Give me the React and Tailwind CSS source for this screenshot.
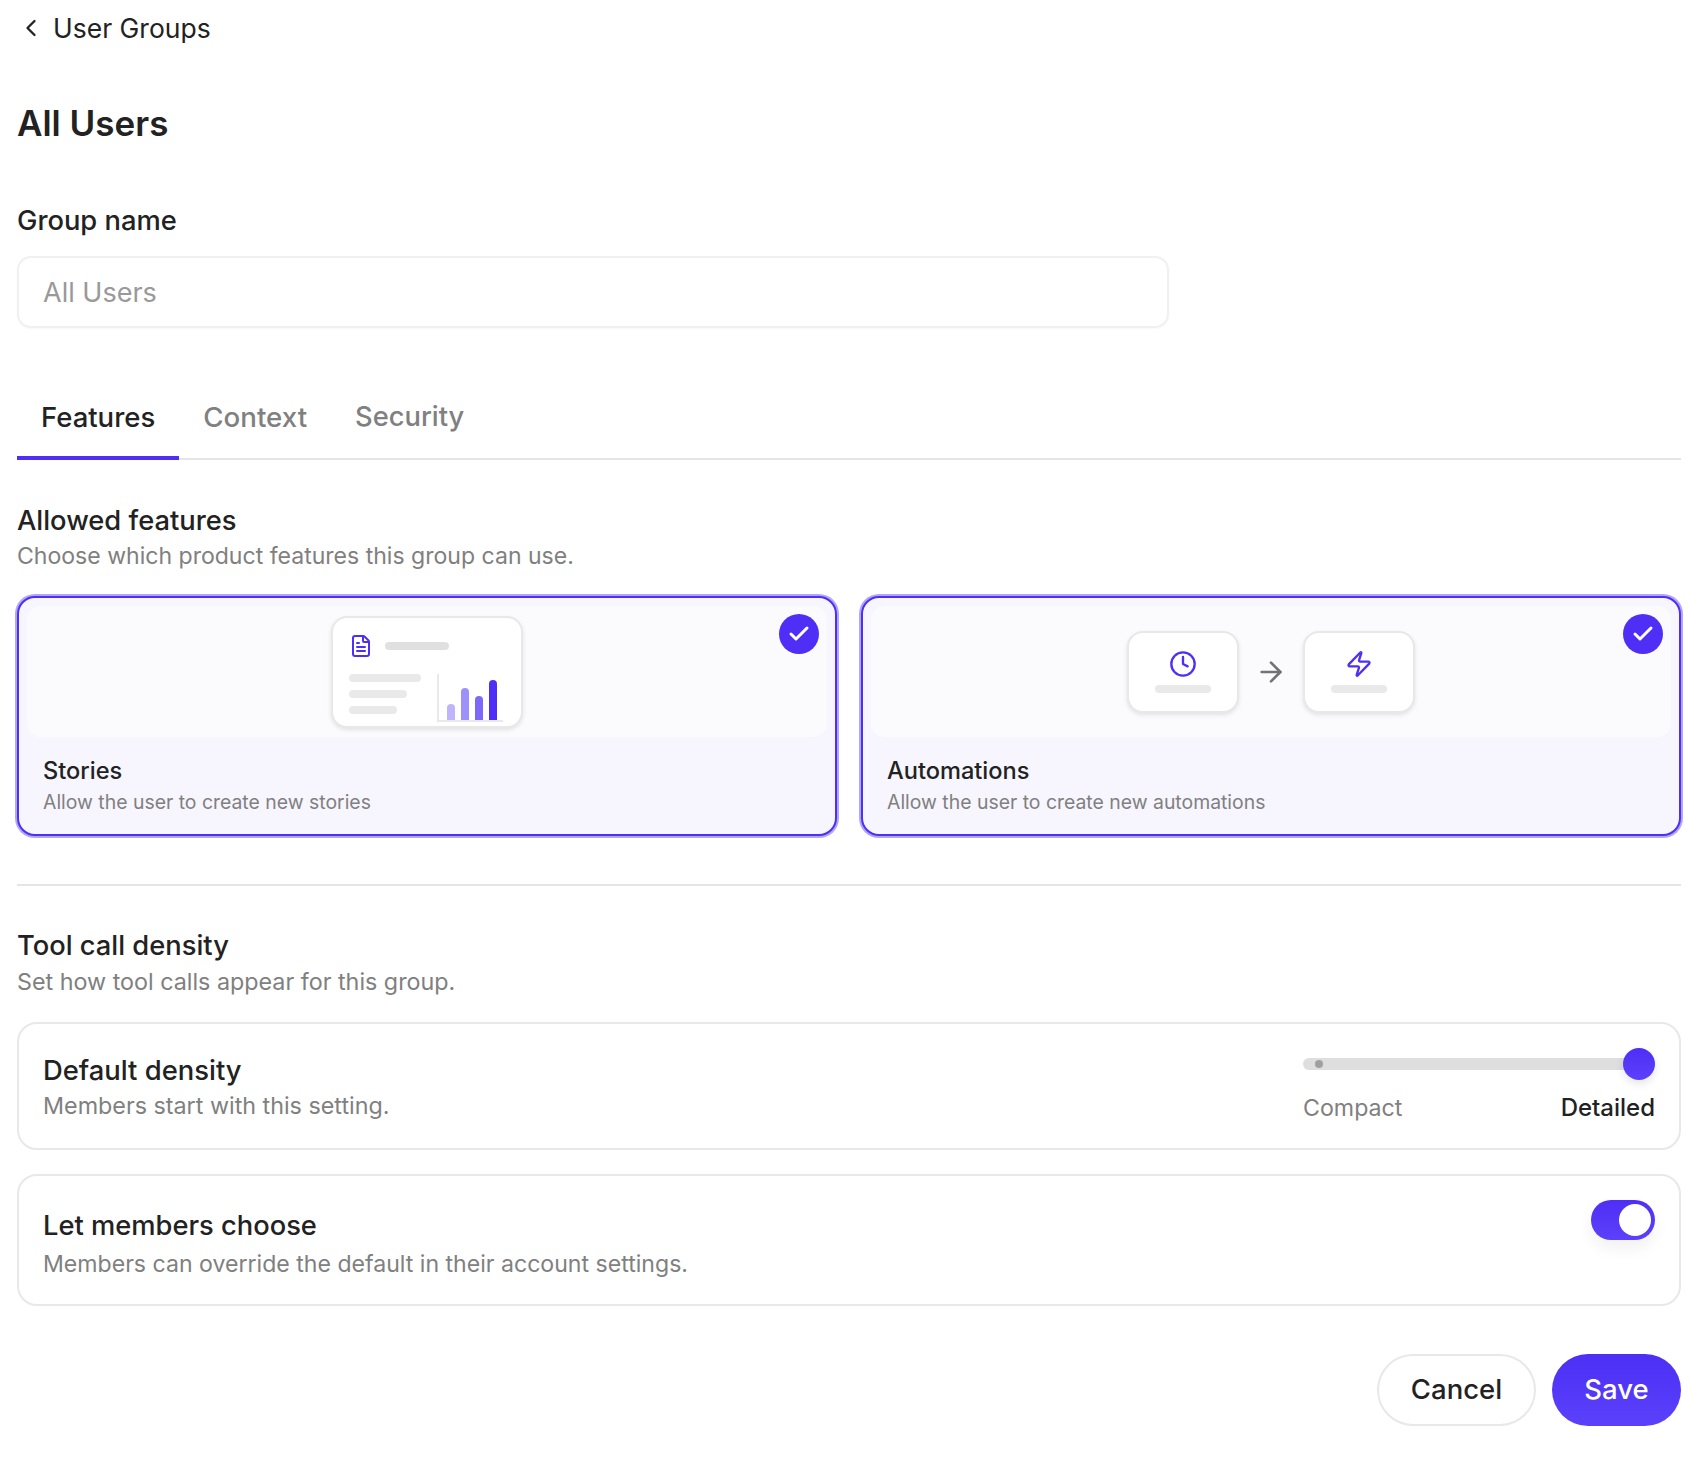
import React from "react";
import { ChevronLeft, FileText, Clock, Zap, ArrowRight, Check } from "lucide-react";

function Badge() {
  return (
    <div className="absolute right-4 top-4 flex h-10 w-10 items-center justify-center rounded-full bg-[#4f2ef5] text-white">
      <Check size={24} strokeWidth={3} />
    </div>
  );
}

function FeatureCard({ title, desc, children }) {
  return (
    <div className="relative flex h-[240px] flex-col rounded-[18px] border-2 border-[#4f2ef5] bg-[#f7f6fe] p-[8px] ring-2 ring-[#b0a6fb]">
      <div className="flex h-[131px] items-center justify-center rounded-[14px] bg-[#fbfbfe]">{children}</div>
      <div className="mt-[18px] pl-[16px] text-[23.6px] leading-[32px] font-medium text-[#222222]">{title}</div>
      <div className="pl-[16px] text-[19.4px] leading-[30px] text-[#808080]">{desc}</div>
      <Badge />
    </div>
  );
}

function Tile({ icon }) {
  return (
    <div className="flex h-[82px] w-[112px] flex-col items-center rounded-[16px] border-2 border-[#e8e8e8] bg-white pt-[17px] shadow-[0_2px_4px_rgba(0,0,0,0.1)]">
      {icon}
      <div className="mt-[7px] h-2 w-14 rounded-full bg-[#e9e9e9]" />
    </div>
  );
}

function Bar({ h, c }) {
  return <div className={`w-2 rounded-t-[4px] ${h} ${c}`} />;
}

export default function App() {
  return (
    <div className="min-h-[1484px] bg-white pl-[17px] pr-[21px] font-['Inter',sans-serif] text-[#222222]">
      <div className="flex h-[56px] items-center text-[#222222]">
        <ChevronLeft size={28} strokeWidth={2} />
        <span className="ml-[8px] text-[26.5px] leading-[36px]">User Groups</span>
      </div>
      <h1 className="mt-[43px] text-[35px] leading-[48px] font-semibold">All Users</h1>
      <div className="mt-[58px] text-[27.3px] leading-[32px] font-medium">Group name</div>
      <div className="mt-[19px] flex h-[72px] w-[1152px] items-center rounded-[14px] border-2 border-[#f0f0f0] pl-[24px] pt-[2px] text-[27px] text-[#999999] shadow-[0_1px_2px_rgba(0,0,0,0.03)]">All Users</div>

      <div className="mt-[71px] flex border-b-2 border-[#e5e5e5]">
        <div className="-mb-[2px] border-b-4 border-[#4f2ef5] px-6 pb-[21px] text-[27.5px] leading-[36px] font-medium">Features</div>
        <div className="px-6 text-[27.7px] leading-[36px] font-medium text-[#808080]">Context</div>
        <div className="px-6 text-[27.3px] leading-[36px] font-medium text-[#808080]">Security</div>
      </div>

      <div className="mt-[43px] text-[27.3px] leading-[36px] font-medium">Allowed features</div>
      <div className="-mt-px text-[23.05px] leading-[36px] text-[#808080]">Choose which product features this group can use.</div>

      <div className="mt-[22px] grid grid-cols-2 gap-6">
        <FeatureCard title="Stories" desc="Allow the user to create new stories">
          <div className="h-[112px] w-[192px] rounded-[16px] border-2 border-[#e8e8e8] bg-white pl-[16px] pt-[16px] shadow-[0_2px_4px_rgba(0,0,0,0.1)]">
            <div className="flex h-6 items-center gap-3">
              <FileText size={24} className="text-[#4f2ef5]" />
              <div className="h-2 w-16 rounded-full bg-[#e0e0e0]" />
            </div>
            <div className="mt-4 flex">
              <div className="flex w-[88px] flex-col gap-2">
                <div className="h-2 w-[72px] rounded-full bg-[#e9e9e9]" />
                <div className="h-2 w-[58px] rounded-full bg-[#e9e9e9]" />
                <div className="h-2 w-[48px] rounded-full bg-[#e9e9e9]" />
              </div>
              <div className="flex h-[48px] w-[66px] items-end gap-[6px] border-b-2 border-l-2 border-[#e9e9e9] pl-2">
                <Bar h="h-4" c="bg-[#c0b5fc]" />
                <Bar h="h-8" c="bg-[#9e90fb]" />
                <Bar h="h-6" c="bg-[#7e68fa]" />
                <Bar h="h-10" c="bg-[#4f2ef5]" />
              </div>
            </div>
          </div>
        </FeatureCard>
        <FeatureCard title="Automations" desc="Allow the user to create new automations">
          <div className="flex items-center gap-4">
            <Tile icon={<Clock size={28} className="text-[#4f2ef5]" />} />
            <ArrowRight size={32} className="text-[#737373]" />
            <Tile icon={<Zap size={28} className="text-[#4f2ef5]" />} />
          </div>
        </FeatureCard>
      </div>

      <div className="mt-[48px] h-[2px] bg-[#e5e5e5]" />

      <div className="mt-[42px] text-[27.3px] leading-[36px] font-medium">Tool call density</div>
      <div className="text-[23.3px] leading-[36px] text-[#808080]">Set how tool calls appear for this group.</div>

      <div className="mt-[22px] flex h-[128px] items-start justify-between rounded-[20px] border-2 border-[#e8e8e8] pl-[24px] pr-[24px]">
        <div className="pt-[28px]">
          <div className="text-[27.4px] leading-[36px] font-medium">Default density</div>
          <div className="text-[23.3px] leading-[36px] text-[#808080]">Members start with this setting.</div>
        </div>
        <div className="w-[352px] pt-[24px]">
          <div className="relative h-[32px]">
            <div className="absolute left-0 right-0 top-[10px] h-3 rounded-full bg-[#dedede]" />
            <div className="absolute left-3 top-3 h-2 w-2 rounded-full bg-[#a0a0a0]" />
            <div className="absolute right-0 top-0 h-8 w-8 rounded-full bg-gradient-to-b from-[#4f2ef5] to-[#5b40fb] shadow-[0_4px_8px_rgba(0,0,0,0.1)]" />
          </div>
          <div className="mt-[10px] flex justify-between leading-[36px]">
            <span className="text-[23.2px] text-[#808080]">Compact</span>
            <span className="text-[24px] font-medium">Detailed</span>
          </div>
        </div>
      </div>

      <div className="mt-[24px] flex h-[132px] items-start justify-between rounded-[20px] border-2 border-[#e8e8e8] pl-[24px] pr-[24px]">
        <div className="pt-[32px]">
          <div className="text-[27.3px] leading-[36px] font-medium">Let members choose</div>
          <div className="mt-[2px] text-[23.1px] leading-[36px] text-[#808080]">Members can override the default in their account settings.</div>
        </div>
        <div className="mt-[24px] flex h-10 w-16 items-center justify-end rounded-full bg-gradient-to-b from-[#4f2ef5] to-[#5b40fb] pr-1 shadow-[0_8px_16px_rgba(0,0,0,0.06)]">
          <div className="h-8 w-8 rounded-full bg-white" />
        </div>
      </div>

      <div className="mt-[48px] flex justify-end gap-4">
        <button className="h-[72px] w-[159px] rounded-full border-2 border-[#e8e8e8] bg-white text-[27.5px] font-medium">Cancel</button>
        <button className="h-[72px] w-[129px] rounded-full bg-gradient-to-b from-[#4c2ff5] to-[#5b40fb] text-[27.5px] font-medium text-white">Save</button>
      </div>
    </div>
  );
}
